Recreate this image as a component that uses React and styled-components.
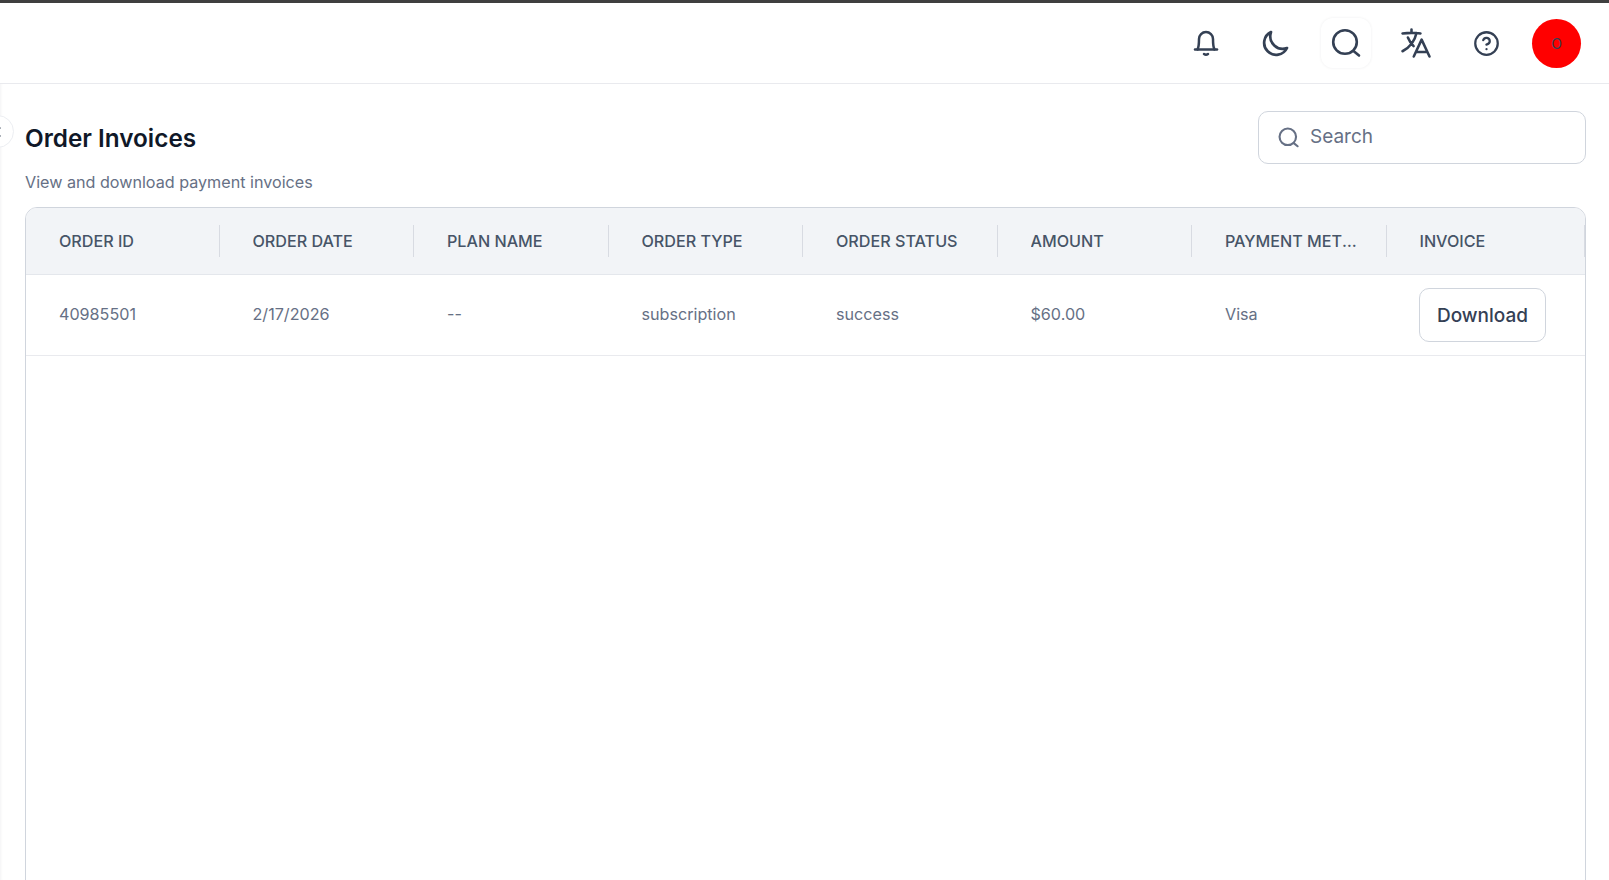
import React from "react";
import styled, { createGlobalStyle } from "styled-components";
import { CircleHelp, ChevronLeft } from "lucide-react";
import { HiOutlineLanguage } from "react-icons/hi2";

const columns = [
  "ORDER ID",
  "ORDER DATE",
  "PLAN NAME",
  "ORDER TYPE",
  "ORDER STATUS",
  "AMOUNT",
  "PAYMENT METHOD",
  "INVOICE"
];

const row = ["40985501", "2/17/2026", "--", "subscription", "success", "$60.00", "Visa"];

const GlobalStyle = createGlobalStyle`
  html, body {
    margin: 0;
    height: 100%;
    overflow: hidden;
    background: #fff;
  }
  * {
    box-sizing: border-box;
  }
`;

const Page = styled.div`
  height: 880px;
  display: flex;
  flex-direction: column;
  font-family: "Inter", sans-serif;
  border-top: 3px solid #3f3f3f;
  overflow: hidden;
`;

const Topbar = styled.header`
  height: 81px;
  flex-shrink: 0;
  display: flex;
  align-items: center;
  justify-content: flex-end;
  gap: 20px;
  padding: 0 28px 0 0;
  border-bottom: 1px solid #e9eaee;
  color: #344054;
`;

const IconButton = styled.button`
  width: 50px;
  height: 50px;
  padding: 0;
  display: flex;
  align-items: center;
  justify-content: center;
  background: #fff;
  border: none;
  border-radius: 12px;
  color: #344054;
  box-shadow: ${(p) => (p.$active ? "0 0 3px rgba(16, 24, 40, 0.07)" : "none")};
`;

const Avatar = styled.div`
  width: 49px;
  height: 49px;
  margin-left: 1px;
  border-radius: 50%;
  background: #ff0000;
  color: #344054;
  font-size: 14px;
  display: flex;
  align-items: center;
  justify-content: center;
`;

const Main = styled.main`
  position: relative;
  flex: 1;
  min-height: 0;
  padding: 27px 23px 0 25px;
  box-shadow: inset 3px 0 3px -2px rgba(16, 24, 40, 0.05);
`;

const Collapse = styled.div`
  position: absolute;
  left: -19px;
  top: 31px;
  width: 33px;
  height: 33px;
  border-radius: 50%;
  background: #fff;
  border: 1px solid #eceef2;
  display: flex;
  align-items: center;
  justify-content: center;
  color: #344054;
`;

const PageHead = styled.div`
  display: flex;
  justify-content: space-between;
  align-items: flex-start;
`;

const Title = styled.h1`
  margin: 12px 0 0;
  font-size: 24.3px;
  line-height: 30px;
  font-weight: 600;
  color: #101828;
`;

const Sub = styled.p`
  margin: 17px 0 0;
  font-size: 16.15px;
  line-height: 24px;
  color: #667085;
`;

const SearchBox = styled.label`
  width: 328px;
  height: 53px;
  display: flex;
  align-items: center;
  gap: 11px;
  padding: 0 0 0 19px;
  border: 1px solid #d0d5dd;
  border-radius: 10px;
  color: #667085;
  font-size: 19px;
`;

const SearchLabel = styled.span`
  margin-bottom: 2px;
`;

const Table = styled.div`
  margin-top: 13px;
  height: 800px;
  border: 1px solid #d0d5dd;
  border-radius: 12px;
  overflow: hidden;
`;

const Grid = styled.div`
  display: grid;
  grid-template-columns: 193.5px repeat(6, 194.5px) 1fr;
  align-items: center;
`;

const HeadRow = styled(Grid)`
  height: 67px;
  background: #f2f4f7;
  border-bottom: 1px solid #e4e7ec;
`;

const BodyRow = styled(Grid)`
  height: 81px;
  border-bottom: 1px solid #e9eaee;
`;

const HeadCell = styled.div`
  height: 32px;
  padding: 0 25px 0 33px;
  display: flex;
  align-items: center;
  border-right: 1px solid #d8dbe2;
  font-size: 16.15px;
  font-weight: 500;
  color: #475467;
  min-width: 0;
`;

const HeadLabel = styled.span`
  overflow: hidden;
  white-space: nowrap;
  text-overflow: ellipsis;
`;

const Cell = styled.div`
  padding: 0 32px 2px 33px;
  font-size: 16.15px;
  color: #667085;
`;

const ActionCell = styled.div`
  padding: 0 0 0 32.5px;
`;

const DownloadButton = styled.button`
  height: 54px;
  width: 127px;
  padding: 0;
  background: #fff;
  border: 1px solid #d0d5dd;
  border-radius: 10px;
  font-family: inherit;
  font-size: 19px;
  font-weight: 500;
  color: #344054;
`;

const BellIcon = () => (
  <svg width="28" height="28" viewBox="0 0 28 28" fill="none" stroke="currentColor" strokeWidth="2.5" strokeLinecap="round" strokeLinejoin="round">
    <path d="M3 20.5h22" />
    <path d="M5.5 20.5c1.3-2.2 1.5-5.5 1.5-10.5a7 7 0 0 1 14 0c0 5 .2 8.3 1.5 10.5" />
    <path d="M12 25q2 1.4 4 0" />
  </svg>
);

const MoonIcon = () => (
  <svg width="28" height="28" viewBox="0 0 28 28" fill="none" stroke="currentColor" strokeWidth="2.7" strokeLinecap="round" strokeLinejoin="round">
    <path d="M9 3A12 12 0 1 0 25 19C16 22.5 5.5 14 9 3Z" />
  </svg>
);

const SearchIcon = ({ size = 30, weight = 2.6 }) => (
  <svg width={size} height={size} viewBox="0 0 30 30" fill="none" stroke="currentColor" strokeWidth={weight} strokeLinecap="round" strokeLinejoin="round">
    <circle cx="14" cy="14" r="11.8" />
    <path d="M22.5 23l5.5 4.5" />
  </svg>
);

export default function App() {
  return (
    <>
      <GlobalStyle />
      <Page>
        <Topbar>
          <IconButton><BellIcon /></IconButton>
          <IconButton><MoonIcon /></IconButton>
          <IconButton $active><SearchIcon /></IconButton>
          <IconButton><HiOutlineLanguage size={36} strokeWidth={1.7} /></IconButton>
          <IconButton><CircleHelp size={27} strokeWidth={2} /></IconButton>
          <Avatar>O</Avatar>
        </Topbar>
        <Main>
          <Collapse><ChevronLeft size={16} /></Collapse>
          <PageHead>
            <div>
              <Title>Order Invoices</Title>
              <Sub>View and download payment invoices</Sub>
            </div>
            <SearchBox>
              <SearchIcon size={21} weight={3} />
              <SearchLabel>Search</SearchLabel>
            </SearchBox>
          </PageHead>
          <Table>
            <HeadRow>
              {columns.map((name) => (
                <HeadCell key={name}>
                  <HeadLabel>{name}</HeadLabel>
                </HeadCell>
              ))}
            </HeadRow>
            <BodyRow>
              {row.map((value, i) => (
                <Cell key={i}>{value}</Cell>
              ))}
              <ActionCell>
                <DownloadButton>Download</DownloadButton>
              </ActionCell>
            </BodyRow>
          </Table>
        </Main>
      </Page>
    </>
  );
}
